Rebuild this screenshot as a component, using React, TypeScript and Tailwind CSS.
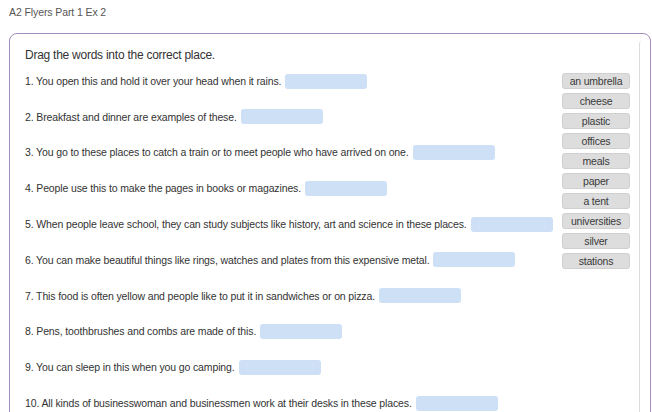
import React from 'react';

const questions = [
    '1. You open this and hold it over your head when it rains.',
    '2. Breakfast and dinner are examples of these.',
    '3. You go to these places to catch a train or to meet people who have arrived on one.',
    '4. People use this to make the pages in books or magazines.',
    '5. When people leave school, they can study subjects like history, art and science in these places.',
    '6. You can make beautiful things like rings, watches and plates from this expensive metal.',
    '7. This food is often yellow and people like to put it in sandwiches or on pizza.',
    '8. Pens, toothbrushes and combs are made of this.',
    '9. You can sleep in this when you go camping.',
    '10. All kinds of businesswoman and businessmen work at their desks in these places.',
];

const words = ['an umbrella', 'cheese', 'plastic', 'offices', 'meals', 'paper', 'a tent', 'universities', 'silver', 'stations'];

export default function App() {
    return (
        <div className="w-[652px] h-[412px] overflow-hidden bg-white text-[#333]" style={{ fontFamily: '"Liberation Sans", Arial, sans-serif' }}>
            <div className="h-[33px] pl-[9px] pt-[5px] text-[10.5px] text-[#555] tracking-[-0.1px]">
                A2 Flyers Part 1 Ex 2
            </div>
            <div className="ml-[9px] mr-[1px] h-[400px] flex border border-[#a68cb8] rounded-lg">
                <div className="w-[552px] shrink-0 pl-[15px] pt-[12px]">
                    <p className="text-[12px] tracking-[-0.25px] leading-[18px] text-[#333]">Drag the words into the correct place.</p>
                    <div>
                        {questions.map((q, i) => (
                            <div key={i} className={`flex items-center h-[18px] ${i === 0 ? 'mt-[8px]' : 'mt-[17.8px]'}`}>
                                <span className="text-[10.5px] tracking-[-0.13px] leading-none whitespace-nowrap">{q}</span>
                                <span className="ml-[4px] w-[82px] h-[15px] rounded-[3px] bg-[#cde0f6] shrink-0" />
                            </div>
                        ))}
                    </div>
                </div>
                <div className="w-[77px] shrink-0 pt-[39px] flex flex-col gap-[4px]">
                    {words.map((w) => (
                        <div key={w} className="w-[68px] h-[16px] flex items-center justify-center rounded-[3px] border border-[#cfcfcf] bg-[#dddddd] text-[10.5px] tracking-[-0.2px] text-[#3a3a3a] leading-none whitespace-nowrap">
                            {w}
                        </div>
                    ))}
                </div>
                <div className="flex-1 mt-[7px] border-l border-[#dcdcdc] rounded-tl-[3px]" />
            </div>
        </div>
    );
}
